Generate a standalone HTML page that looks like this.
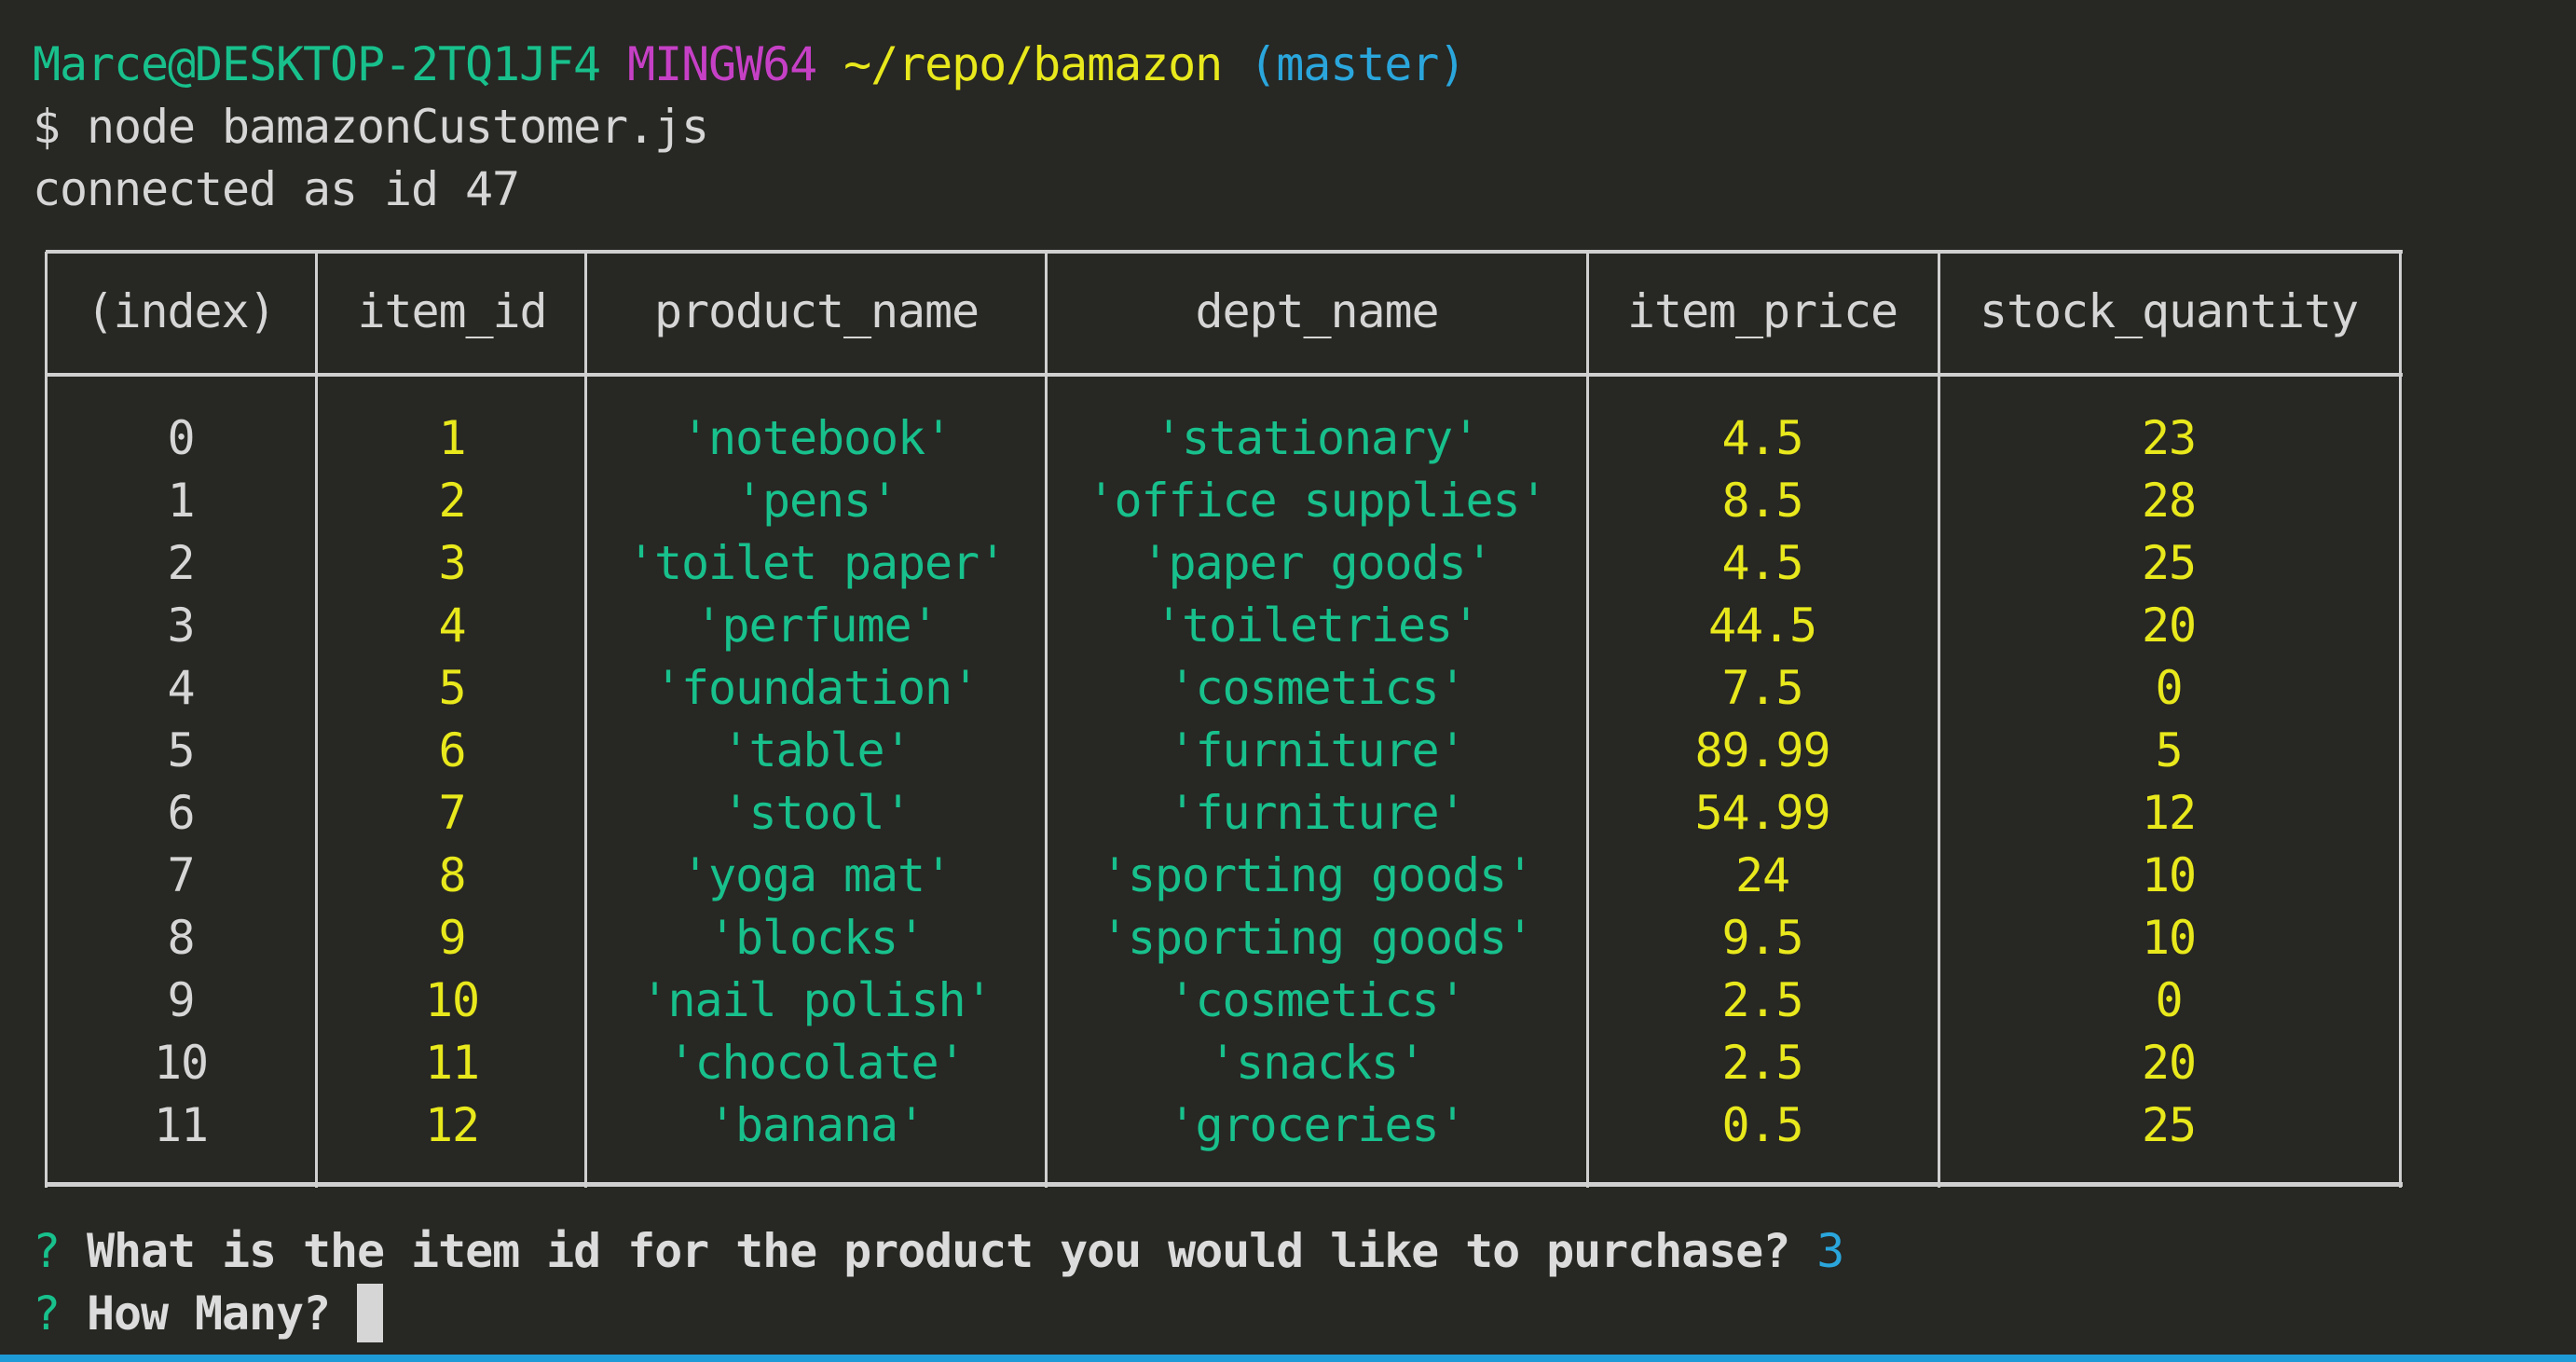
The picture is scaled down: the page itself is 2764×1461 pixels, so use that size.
<!DOCTYPE html>
<html><head><meta charset="utf-8"><style>
html,body{margin:0;padding:0;}
body{width:2764px;height:1461px;background:#272723;position:relative;overflow:hidden;
font-family:"DejaVu Sans Mono","Liberation Mono",monospace;font-size:50px;letter-spacing:-1.1px;color:#d6d6d6;}
.l{position:absolute;left:35px;height:67px;line-height:67px;white-space:pre;}
.g{color:#18c08c}.y{color:#e8e81c}.m{color:#c640c6}.c{color:#2aa6dc}
.b{font-weight:bold;color:#dcdcdc}
.h{position:absolute;background:#d0d0d0;height:4px;}
.v{position:absolute;background:#d0d0d0;width:3px;top:270px;height:1004px;}
.t{position:absolute;height:67px;line-height:67px;white-space:pre;transform:translateX(-50%);}
</style></head><body>
<div class="l" style="top:36px"><span class="g">Marce@DESKTOP-2TQ1JF4</span> <span class="m">MINGW64</span> <span class="y">~/repo/bamazon</span> <span class="c">(master)</span></div>
<div class="l" style="top:103px">$ node bamazonCustomer.js</div>
<div class="l" style="top:170px">connected as id 47</div>

<div class="h" style="left:49px;width:2529px;top:268px"></div>
<div class="h" style="left:49px;width:2529px;top:400px"></div>
<div class="h" style="left:49px;width:2529px;top:1268px;height:5px"></div>
<div class="v" style="left:48px"></div>
<div class="v" style="left:338px"></div>
<div class="v" style="left:627px"></div>
<div class="v" style="left:1121px"></div>
<div class="v" style="left:1702px"></div>
<div class="v" style="left:2079px"></div>
<div class="v" style="left:2574px"></div>

<div id="tbl"></div>
<script>
var cx=[194,485,876,1413,1891,2327];
var hd=["(index)","item_id","product_name","dept_name","item_price","stock_quantity"];
var rows=[
["0","1","'notebook'","'stationary'","4.5","23"],
["1","2","'pens'","'office supplies'","8.5","28"],
["2","3","'toilet paper'","'paper goods'","4.5","25"],
["3","4","'perfume'","'toiletries'","44.5","20"],
["4","5","'foundation'","'cosmetics'","7.5","0"],
["5","6","'table'","'furniture'","89.99","5"],
["6","7","'stool'","'furniture'","54.99","12"],
["7","8","'yoga mat'","'sporting goods'","24","10"],
["8","9","'blocks'","'sporting goods'","9.5","10"],
["9","10","'nail polish'","'cosmetics'","2.5","0"],
["10","11","'chocolate'","'snacks'","2.5","20"],
["11","12","'banana'","'groceries'","0.5","25"]];
var cls=["","y","g","g","y","y"];
var h="";
for(var i=0;i<6;i++)h+='<div class="t" style="left:'+cx[i]+'px;top:301px">'+hd[i]+'</div>';
for(var r=0;r<rows.length;r++)for(var i=0;i<6;i++)
h+='<div class="t '+cls[i]+'" style="left:'+cx[i]+'px;top:'+(437+67*r)+'px">'+rows[r][i]+'</div>';
document.getElementById("tbl").innerHTML=h;
</script>

<div class="l" style="top:1309px"><span class="g">?</span> <span class="b">What is the item id for the product you would like to purchase?</span> <span class="c">3</span></div>
<div class="l" style="top:1376px"><span class="g">?</span> <span class="b">How Many?</span> </div>
<div style="position:absolute;left:383px;top:1377px;width:28px;height:63px;background:#d6d6d6"></div>
<div style="position:absolute;left:0;top:1453px;width:2764px;height:8px;background:#1e9ad6"></div>
</body></html>
